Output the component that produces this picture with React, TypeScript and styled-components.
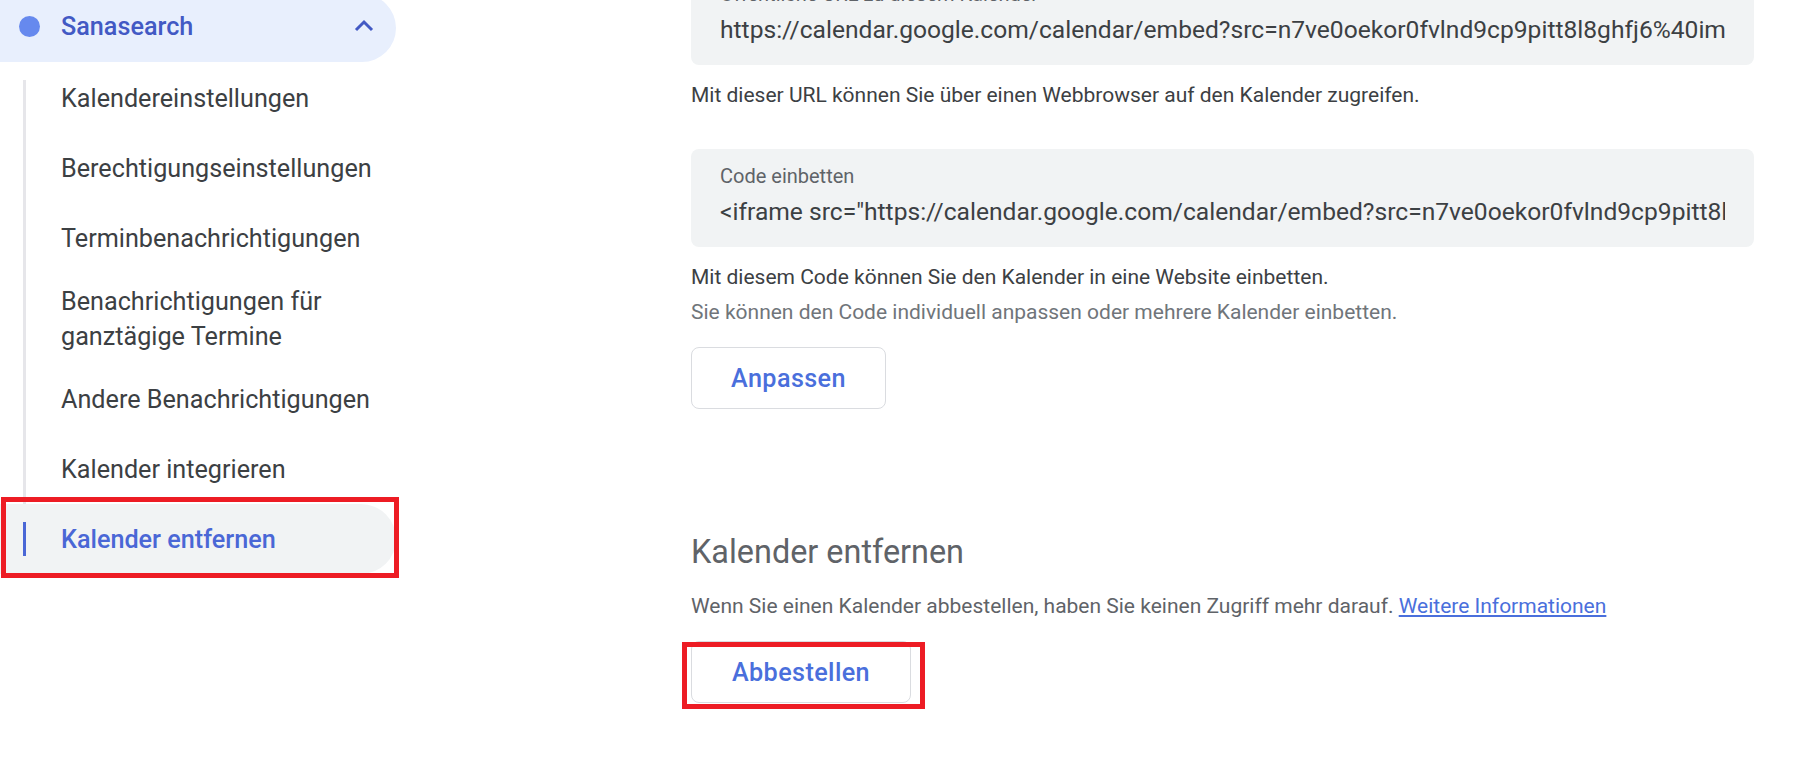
import React from "react";
import styled, { createGlobalStyle } from "styled-components";

const GlobalStyle = createGlobalStyle`
  html, body {
    margin: 0;
    padding: 0;
    background: #ffffff;
    overflow: hidden;
  }
  body {
    font-family: Roboto, "Liberation Sans", Arial, sans-serif;
    color: #3c4043;
  }
`;

const colors = {
  text: "#3c4043",
  muted: "#5f6368",
  light: "#70757a",
  blue: "#4a67d6",
  link: "#4a6fdc",
  box: "#f1f3f4",
  border: "#dadce0",
  annotation: "#ed1c24",
};

export const Page = styled.div`
  display: flex;
  align-items: flex-start;
  width: 1813px;
  height: 759px;
`;

export const SideNavigation = styled.nav`
  flex: 0 0 400px;
`;

export const CalendarHeader = styled.div`
  display: flex;
  align-items: center;
  width: 396px;
  height: 68px;
  margin-top: -6px;
  padding: 0 20px 0 19px;
  box-sizing: border-box;
  background: #e8effd;
  border-radius: 0 34px 34px 0;
`;

export const ColorDot = styled.span`
  flex: 0 0 21px;
  height: 21px;
  border-radius: 50%;
  background: #6689ee;
  margin-top: -4px;
`;

export const CalendarName = styled.span`
  flex: 1;
  margin-left: 21px;
  margin-top: -4px;
  font-size: 25.2px;
  font-weight: 500;
  color: #4259c4;
`;

export const Chevron = styled.svg`
  margin-top: -4px;
  width: 24px;
  height: 24px;
`;

export const NavigationList = styled.ul`
  position: relative;
  list-style: none;
  margin: 1px 0 0;
  padding: 0;

  &::before {
    content: "";
    position: absolute;
    left: 23px;
    width: 3px;
    top: 17px;
    bottom: 59px;
    background: #e6e6ea;
  }
`;

export const NavigationLink = styled.li<{ $active?: boolean }>`
  position: relative;
  display: flex;
  align-items: center;
  min-height: 70px;
  width: 396px;
  box-sizing: border-box;
  padding: 10.5px 20px 10.5px 61px;
  font-size: 25.2px;
  line-height: 35px;
  color: ${(p) => (p.$active ? colors.blue : colors.text)};
  font-weight: ${(p) => (p.$active ? 500 : 400)};
  background: ${(p) => (p.$active ? colors.box : "transparent")};
  border-radius: 0 35px 35px 0;

  ${(p) =>
    p.$active &&
    `
    &::before {
      content: "";
      position: absolute;
      left: 23px;
      top: 18px;
      width: 3px;
      height: 34px;
      background: ${colors.blue};
    }
  `}
`;

export const Annotation = styled.span<{ $top: number; $left: number; $w: number; $h: number }>`
  position: absolute;
  top: ${(p) => p.$top}px;
  left: ${(p) => p.$left}px;
  width: ${(p) => p.$w}px;
  height: ${(p) => p.$h}px;
  border: 5px solid ${colors.annotation};
  box-sizing: border-box;
  pointer-events: none;
`;

export const ContentWrapper = styled.main`
  flex: 0 0 1063px;
  width: 1063px;
  min-width: 0;
  margin-left: 291px;
  margin-top: -33px;
`;

export const FieldBox = styled.div`
  background: ${colors.box};
  border-radius: 8px;
  padding: 13px 29px 18px;
  min-width: 0;
`;

export const FieldLabel = styled.div`
  font-size: 20px;
  line-height: 28px;
  color: ${colors.muted};
  margin-bottom: 4px;
`;

export const FieldValue = styled.div`
  font-size: 24.6px;
  line-height: 35px;
  color: ${colors.text};
  white-space: nowrap;
  overflow: hidden;
`;

export const Hint = styled.p<{ $light?: boolean; $gap?: number }>`
  margin: ${(p) => p.$gap ?? 0}px 0 0;
  font-size: 21px;
  line-height: 35px;
  color: ${(p) => (p.$light ? colors.light : colors.text)};
`;

export const Spacer = styled.div<{ $h: number }>`
  height: ${(p) => p.$h}px;
`;

export const OutlineButton = styled.button<{ $w: number; $gap?: number }>`
  position: relative;
  display: block;
  width: ${(p) => p.$w}px;
  height: 62px;
  margin-top: ${(p) => p.$gap ?? 16}px;
  background: #ffffff;
  border: 1px solid ${colors.border};
  border-radius: 8px;
  font-family: Roboto, "Liberation Sans", Arial, sans-serif;
  font-size: 25.2px;
  font-weight: 500;
  letter-spacing: 0.4px;
  color: ${colors.link};
  padding: 0;
`;

export const SectionTitle = styled.h2`
  margin: 121px 0 0;
  font-size: 32.4px;
  line-height: 44px;
  font-weight: 400;
  color: ${colors.muted};
`;

export const Description = styled.p`
  margin: 15px 0 0;
  font-size: 21px;
  line-height: 35px;
  color: ${colors.muted};

  a {
    color: ${colors.link};
    text-decoration: underline;
  }
`;

const links = [
  { title: "Kalendereinstellungen" },
  { title: "Berechtigungseinstellungen" },
  { title: "Terminbenachrichtigungen" },
  { title: "Benachrichtigungen für ganztägige Termine" },
  { title: "Andere Benachrichtigungen" },
  { title: "Kalender integrieren" },
  { title: "Kalender entfernen", active: true },
];

const App: React.FC = () => {
  return (
    <>
      <GlobalStyle />
      <Page>
        <SideNavigation>
          <CalendarHeader>
            <ColorDot />
            <CalendarName>Sanasearch</CalendarName>
            <Chevron viewBox="0 0 24 24">
              <path d="M4 16 L12 8 L20 16" fill="none" stroke="#4259c4" strokeWidth="3" />
            </Chevron>
          </CalendarHeader>
          <NavigationList>
            {links.map((l) => (
              <NavigationLink key={l.title} $active={l.active}>
                {l.title}
                {l.active && <Annotation $top={-7} $left={1} $w={398} $h={81} />}
              </NavigationLink>
            ))}
          </NavigationList>
        </SideNavigation>

        <ContentWrapper>
          <FieldBox>
            <FieldLabel>Öffentliche URL zu diesem Kalender</FieldLabel>
            <FieldValue>
              https://calendar.google.com/calendar/embed?src=n7ve0oekor0fvlnd9cp9pitt8l8ghfj6%40import.calendar.google.com&amp;ctz=Europe%2FBerlin
            </FieldValue>
          </FieldBox>
          <Hint $gap={13}>Mit dieser URL können Sie über einen Webbrowser auf den Kalender zugreifen.</Hint>

          <Spacer $h={36} />
          <FieldBox>
            <FieldLabel>Code einbetten</FieldLabel>
            <FieldValue>
              {'<iframe src="https://calendar.google.com/calendar/embed?src=n7ve0oekor0fvlnd9cp9pitt8l8ghfj6%40import.calendar.google.com&ctz=Europe%2FBerlin" style="border: 0" width="800" height="600" frameborder="0" scrolling="no"></iframe>'}
            </FieldValue>
          </FieldBox>
          <Hint $gap={13}>Mit diesem Code können Sie den Kalender in eine Website einbetten.</Hint>
          <Hint $light>Sie können den Code individuell anpassen oder mehrere Kalender einbetten.</Hint>
          <OutlineButton $w={195} $gap={17}>Anpassen</OutlineButton>

          <SectionTitle>Kalender entfernen</SectionTitle>
          <Description>
            Wenn Sie einen Kalender abbestellen, haben Sie keinen Zugriff mehr darauf.{" "}
            <a href="#">Weitere Informationen</a>
          </Description>
          <OutlineButton $w={220} $gap={17}>
            Abbestellen
            <Annotation $top={0} $left={-10} $w={243} $h={67} />
          </OutlineButton>
        </ContentWrapper>
      </Page>
    </>
  );
};

export default App;
